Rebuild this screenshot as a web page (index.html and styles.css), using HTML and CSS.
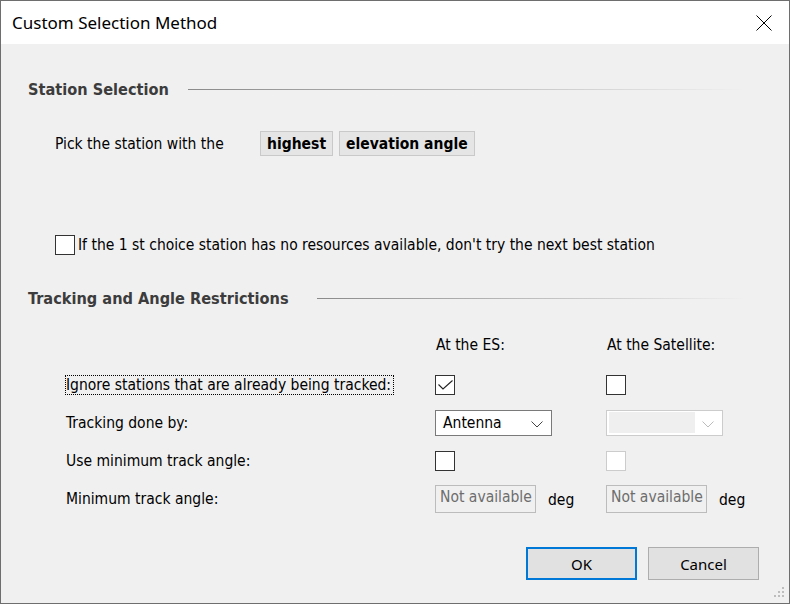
FILE: index.html
```html
<!DOCTYPE html>
<html>
<head>
  <title>Custom Selection Method</title>
  <meta charset="UTF-8">
  <link rel="stylesheet" href="styles.css">
</head>
<body>
  <div class="window">
    <div class="titlebar">
      <span class="title">Custom Selection Method</span>
      <svg class="close" width="16" height="16" viewBox="0 0 16 16">
        <path d="M0.5 0.5 L15.5 15.5 M15.5 0.5 L0.5 15.5" stroke="#000" stroke-width="1" fill="none"/>
      </svg>
    </div>

    <div class="content">
      <div class="group-header">
        <span class="group-title">Station Selection</span>
        <span class="group-line"></span>
      </div>

      <div class="pick-row">
        <span class="pick-label">Pick the station with the</span>
        <span class="token">highest</span>
        <span class="token">elevation angle</span>
      </div>

      <label class="check-row">
        <span class="checkbox"></span>
        <span>If the 1 st choice station has no resources available, don't try the next best station</span>
      </label>

      <div class="group-header second">
        <span class="group-title">Tracking and Angle Restrictions</span>
        <span class="group-line"></span>
      </div>

      <div class="restrictions">
        <span></span>
        <span class="col-head">At the ES:</span>
        <span class="col-head">At the Satellite:</span>

        <span class="row-label"><span class="focused">Ignore stations that are already being tracked:</span></span>
        <span class="checkbox">
          <svg width="18" height="18" viewBox="0 0 18 18">
            <path d="M2.5 8.5 L7 13 L16.5 4.5" stroke="#222" stroke-width="1.1" fill="none"/>
          </svg>
        </span>
        <span class="checkbox"></span>

        <span class="row-label">Tracking done by:</span>
        <span class="combo">
          <span class="combo-text">Antenna</span>
          <svg class="chevron" width="12" height="7" viewBox="0 0 12 7">
            <path d="M0.5 0.5 L6 6 L11.5 0.5" stroke="#444" stroke-width="1" fill="none"/>
          </svg>
        </span>
        <span class="combo disabled">
          <span class="combo-fill"></span>
          <svg class="chevron" width="12" height="7" viewBox="0 0 12 7">
            <path d="M0.5 0.5 L6 6 L11.5 0.5" stroke="#bcbcbc" stroke-width="1" fill="none"/>
          </svg>
        </span>

        <span class="row-label">Use minimum track angle:</span>
        <span class="checkbox"></span>
        <span class="checkbox disabled"></span>

        <span class="row-label">Minimum track angle:</span>
        <span class="unit-field">
          <span class="textbox">Not available</span>
          <span class="unit">deg</span>
        </span>
        <span class="unit-field">
          <span class="textbox">Not available</span>
          <span class="unit">deg</span>
        </span>
      </div>

      <div class="button-row">
        <button class="default">OK</button>
        <button>Cancel</button>
      </div>
    </div>

    <svg class="grip" width="12" height="12" viewBox="0 0 12 12">
      <rect x="8" y="0" width="2" height="2" fill="#bdbdbd"/>
      <rect x="4" y="4" width="2" height="2" fill="#bdbdbd"/>
      <rect x="8" y="4" width="2" height="2" fill="#bdbdbd"/>
      <rect x="0" y="8" width="2" height="2" fill="#bdbdbd"/>
      <rect x="4" y="8" width="2" height="2" fill="#bdbdbd"/>
      <rect x="8" y="8" width="2" height="2" fill="#bdbdbd"/>
    </svg>
  </div>
</body>
</html>
```

FILE: styles.css
```css
* {
  margin: 0;
  padding: 0;
  box-sizing: border-box;
}

body {
  margin: 0;
  background: #f0f0f0;
  font-family: 'DejaVu Sans Condensed', 'DejaVu Sans', sans-serif;
  font-size: 15.5px;
  color: #000;
}

.window {
  position: relative;
  width: 790px;
  height: 604px;
  border: 1px solid #6e6e6e;
  background: #f0f0f0;
}

/* Title bar */
.titlebar {
  height: 43px;
  background: #fff;
  display: flex;
  align-items: center;
  justify-content: space-between;
  padding: 0 17px 0 11px;
}

.title {
  font-family: 'Noto Sans', 'Open Sans', sans-serif;
  font-size: 17px;
  color: #000;
}

.close {
  display: block;
}

.content {
  padding: 0 29px 0 27px;
}

/* Group headers */
.group-header {
  display: flex;
  align-items: center;
  height: 20px;
  margin-top: 35px;
}

.group-title {
  font-weight: 700;
  color: #3c3c3c;
  font-size: 16.2px;
}

.group-line {
  flex: 1;
  height: 1px;
  margin-left: 19px;
  margin-right: 14px;
  background: linear-gradient(to right, #8a8a8a, #c8c8c8 60%, rgba(240, 240, 240, 0));
}

.group-header.second {
  margin-top: 33px;
}

.group-header.second .group-line {
  margin-left: 28px;
}

/* Station selection */
.pick-row {
  display: flex;
  align-items: center;
  height: 25px;
  margin-top: 32px;
  padding-left: 27px;
}

.pick-label {
  width: 205px;
}

.token {
  height: 25px;
  display: flex;
  align-items: center;
  padding: 0 6px;
  margin-right: 6px;
  background: #e5e5e5;
  border: 1px solid #c9c9c9;
  font-weight: 700;
}

.check-row {
  display: flex;
  align-items: center;
  gap: 3px;
  height: 20px;
  margin-top: 79px;
  padding-left: 27px;
}

.checkbox {
  width: 20px;
  height: 20px;
  border: 1px solid #333;
  background: #fff;
  display: flex;
  align-items: center;
  justify-content: center;
}

.checkbox.disabled {
  border-color: #cccccc;
}

/* Tracking and angle restrictions */
.restrictions {
  display: grid;
  grid-template-columns: 369px 171px auto;
  grid-template-rows: 31px 38px 37px 39px 37px;
  align-items: center;
  margin-top: 27px;
  padding-left: 38px;
}

.col-head {
  align-self: start;
  height: 20px;
  line-height: 20px;
  padding-left: 1px;
}

.row-label {
  display: flex;
}

.focused {
  outline: 1px dotted #000;
  outline-offset: 0;
  padding-right: 2px;
}

.combo {
  position: relative;
  width: 117px;
  height: 26px;
  border: 1px solid #7a7a7a;
  background: #fff;
  display: flex;
  align-items: center;
  padding-left: 7px;
}

.combo.disabled {
  border-color: #cccccc;
  padding-left: 2px;
}

.combo-fill {
  width: 86px;
  height: 21px;
  background: #efefef;
}

.chevron {
  position: absolute;
  right: 8px;
  top: 10px;
}

.unit-field {
  display: flex;
  align-items: center;
}

.textbox {
  width: 101px;
  height: 28px;
  border: 1px solid #bcbcbc;
  background: #f0f0f0;
  color: #6d6d6d;
  padding: 2px 0 0 4px;
  white-space: nowrap;
}

.unit {
  margin-left: 12px;
  padding-top: 2px;
}

/* Buttons */
.button-row {
  display: flex;
  justify-content: flex-end;
  gap: 11px;
  margin-top: 30px;
  margin-right: 1px;
}

button {
  width: 111px;
  height: 33px;
  background: #e1e1e1;
  border: 1px solid #adadad;
  font-family: 'Noto Sans', 'Open Sans', sans-serif;
  font-size: 15px;
  color: #000;
}

button.default {
  border: 2px solid #0078d7;
}

.grip {
  position: absolute;
  right: 3px;
  bottom: 4px;
}
```
